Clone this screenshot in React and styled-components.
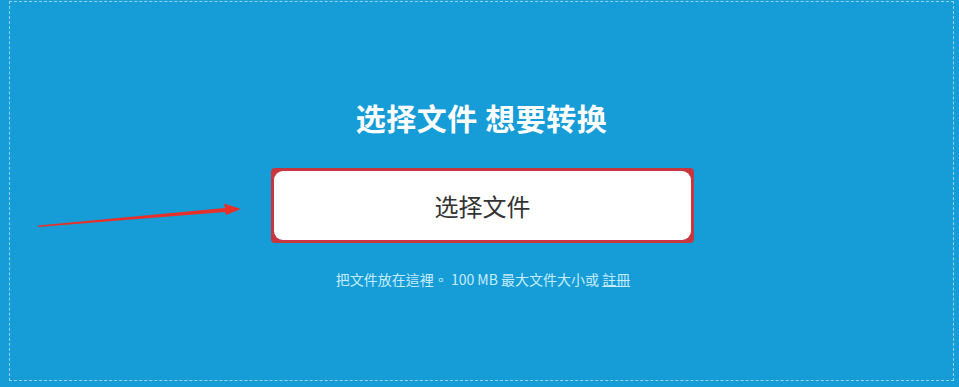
import React from 'react';
import styled, {createGlobalStyle} from 'styled-components';

const GlobalStyle = createGlobalStyle`
  html, body {
    margin: 0;
    padding: 0;
    background: #169dd8;
  }
  body {
    font-family: "Open Sans", "Noto Sans CJK SC", "Noto Sans CJK TC", sans-serif;
  }
`

const Page = styled.div`
  position: relative;
  width: 959px;
  height: 387px;
  box-sizing: border-box;
  padding: 1px 5px 6px 9px;
  background: #169dd8;
`

const DropZone = styled.div`
  height: 100%;
  box-sizing: border-box;
  border: 1px dashed rgba(190, 230, 250, 0.75);
  display: flex;
  flex-direction: column;
  align-items: center;
  padding-top: 96px;
`

const Title = styled.h1`
  margin: 0;
  font-family: "Noto Sans CJK SC", sans-serif;
  font-weight: 700;
  font-size: 30px;
  line-height: 38px;
  color: #fff;
  letter-spacing: 0.5px;
`

const Highlight = styled.div`
  margin-top: 32px;
  margin-left: 2px;
  width: 423px;
  height: 75px;
  box-sizing: border-box;
  border: 3px solid #c8363f;
  border-radius: 4px;
  background: #c8363f;
`

const PickButton = styled.button`
  width: 100%;
  height: 100%;
  border: none;
  border-radius: 9px;
  background: #fff;
  color: #333;
  font-family: "Noto Sans CJK SC", sans-serif;
  font-size: 24px;
  cursor: pointer;
`

const Hint = styled.p`
  margin: 26px 0 0 3px;
  font-family: "Noto Sans CJK TC", "Noto Sans CJK SC", sans-serif;
  font-size: 14px;
  line-height: 20px;
  color: #c6ecfb;
`

const SignUp = styled.a`
  color: #c6ecfb;
  text-decoration: underline;
`

const Arrow = styled.svg`
  position: absolute;
  left: 36px;
  top: 200px;
  pointer-events: none;
`

const App = () => {
  return (
    <>
      <GlobalStyle />
      <Page>
        <DropZone>
          <Title>选择文件 想要转换</Title>
          <Highlight>
            <PickButton type='button'>选择文件</PickButton>
          </Highlight>
          <Hint>
            把文件放在這裡。 100 MB 最大文件大小或 <SignUp href='#'>註冊</SignUp>
          </Hint>
        </DropZone>
        {/* annotation arrow pointing at the button */}
        <Arrow width='210' height='32' viewBox='0 0 210 32'>
          <polygon points='2,25.5 189,8 188,3.5 205,9 190,15 189,12 2,27' fill='#e8302a' />
        </Arrow>
      </Page>
    </>
  )
};

export default App;
